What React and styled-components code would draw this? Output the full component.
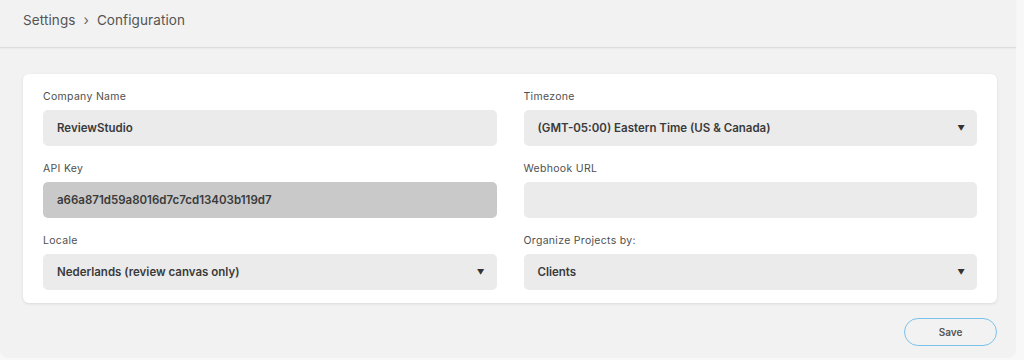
import React from "react";
import styled, { createGlobalStyle } from "styled-components";

const GlobalStyle = createGlobalStyle`
  body {
    margin: 0;
    background: #f8f8f8;
    font-family: Inter, "Open Sans", sans-serif;
  }
`;

const fields = [
  { label: "Company Name", value: "ReviewStudio" },
  { label: "Timezone", value: "(GMT-05:00) Eastern Time (US & Canada)", select: true },
  { label: "API Key", value: "a66a871d59a8016d7c7cd13403b119d7", disabled: true },
  { label: "Webhook URL", value: "" },
  { label: "Locale", value: "Nederlands (review canvas only)", select: true },
  { label: "Organize Projects by:", value: "Clients", select: true },
];

const App = () => {
  return (
    <>
      <GlobalStyle />
      <Page>
        <Header>
          <Crumb>Settings</Crumb>
          <Sep>›</Sep>
          <Crumb>Configuration</Crumb>
        </Header>
        <Card>
          <Grid>
            {fields.map((f) => (
              <Field key={f.label}>
                <Label>{f.label}</Label>
                <Input disabled={f.disabled}>
                  <span>{f.value}</span>
                  {f.select && <Arrow>▼</Arrow>}
                </Input>
              </Field>
            ))}
          </Grid>
        </Card>
        <Footer>
          <SaveButton>Save</SaveButton>
        </Footer>
      </Page>
    </>
  );
};

const Page = styled.div`
  width: 1016px;
  height: 358px;
  background: #f2f2f2;
  border-radius: 0 0 8px 8px;
  box-sizing: border-box;
`;

const Header = styled.div`
  height: 48px;
  box-sizing: border-box;
  padding: 11px 23px 0;
  display: flex;
  align-items: flex-start;
  gap: 8px;
  border-bottom: 1px solid #dcdcdc;
  box-shadow: 0 1px 2px rgba(0, 0, 0, 0.04);
`;

const Crumb = styled.span`
  font-size: 13.5px;
  line-height: 18px;
  color: #545454;
  letter-spacing: 0.1px;
`;

const Sep = styled.span`
  font-size: 14px;
  line-height: 18px;
  color: #666;
`;

const Card = styled.div`
  margin: 26px 19px 0 23px;
  background: #fff;
  border-radius: 6px;
  box-shadow: 0 1px 3px rgba(0, 0, 0, 0.1);
  padding: 15px 20px 13px;
`;

const Grid = styled.div`
  display: grid;
  grid-template-columns: 1fr 1fr;
  column-gap: 27px;
  row-gap: 15px;
`;

const Field = styled.div`
  display: flex;
  flex-direction: column;
`;

const Label = styled.label`
  font-size: 10.5px;
  line-height: 16px;
  letter-spacing: 0.3px;
  color: #4f4f4f;
  margin-bottom: 5px;
`;

const Input = styled.div`
  height: 36px;
  border-radius: 5px;
  background: ${({ disabled }) => (disabled ? "#c9c9c9" : "#ebebeb")};
  display: flex;
  align-items: center;
  justify-content: space-between;
  padding: 0 12px 0 14px;
  font-size: 11.5px;
  font-weight: 600;
  color: #3a3a3a;
`;

const Arrow = styled.span`
  font-size: 7.5px;
  color: #333;
`;

const Footer = styled.div`
  display: flex;
  justify-content: flex-end;
  padding: 15px 19px 0 0;
`;

const SaveButton = styled.button`
  width: 93px;
  height: 28px;
  border: 1px solid #79c3ea;
  border-radius: 14px;
  background: transparent;
  font-family: inherit;
  font-size: 10px;
  font-weight: 600;
  color: #555;
`;

export default App;
